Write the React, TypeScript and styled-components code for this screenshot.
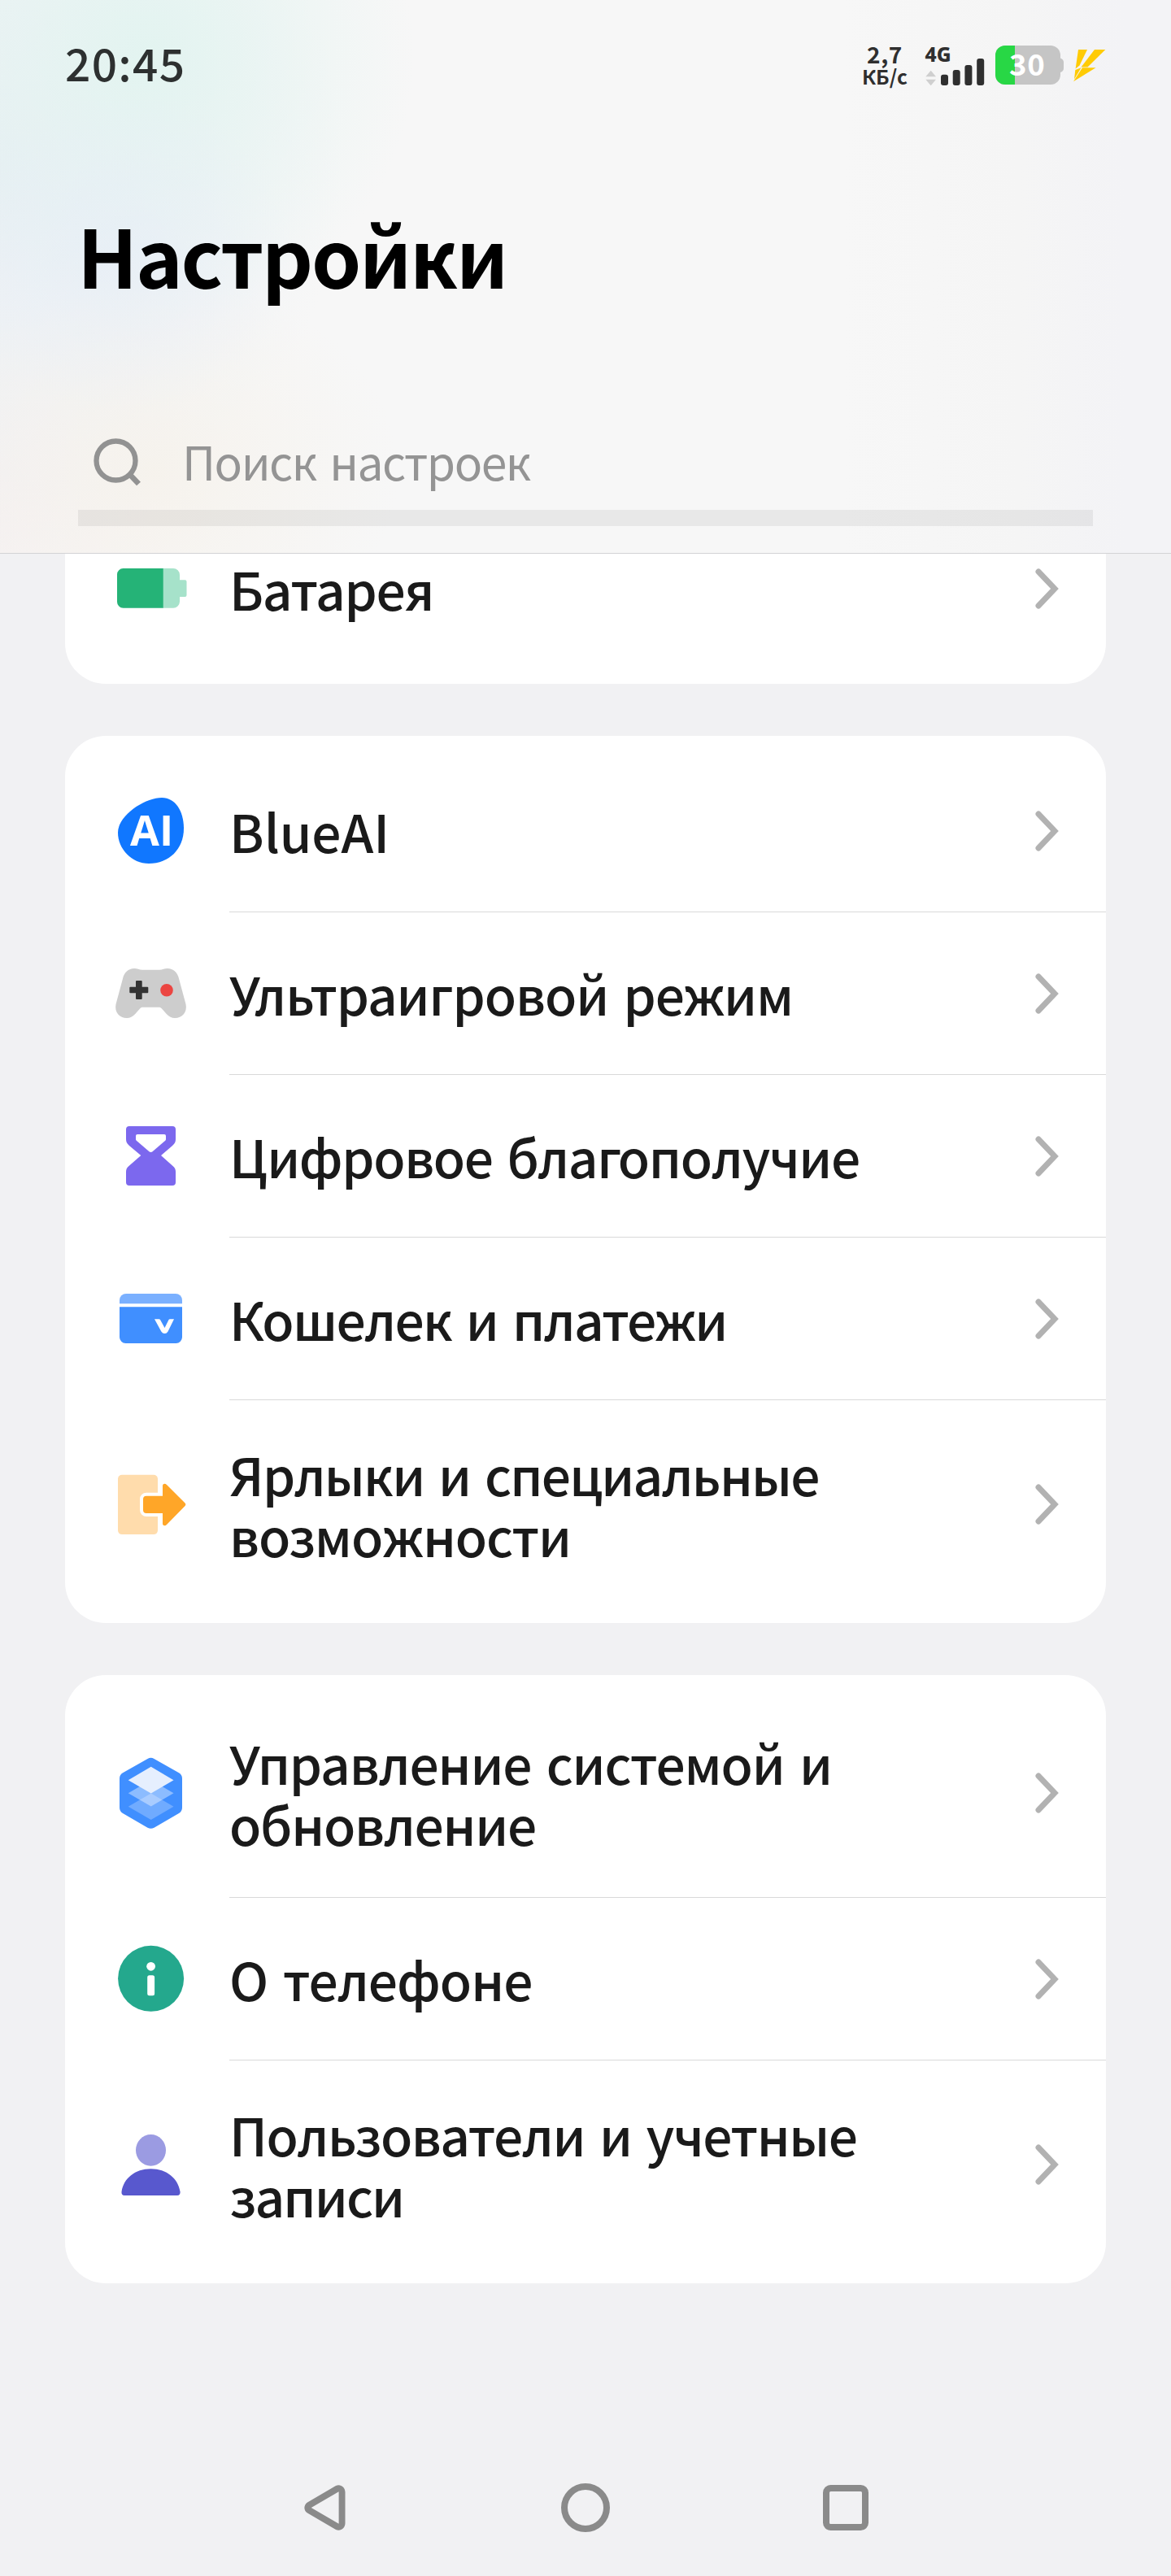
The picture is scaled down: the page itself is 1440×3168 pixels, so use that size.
import React from 'react';
import styled, { createGlobalStyle } from 'styled-components';

const uiFont = '"Noto Sans CJK SC", "Noto Sans", "Open Sans", sans-serif';

const GlobalStyle = createGlobalStyle`
  * { box-sizing: border-box; }
  body {
    margin: 0;
    background: #f1f1f3;
    font-family: ${uiFont};
  }
  svg { display: block; overflow: visible; }
`;

const Screen = styled.div`
  display: flex;
  flex-direction: column;
  width: 1440px;
  height: 3168px;
  overflow: hidden;
  background: #f1f1f3;
`;

const Header = styled.header`
  position: relative;
  z-index: 1;
  display: flex;
  flex-direction: column;
  flex: none;
  height: 681px;
  border-bottom: 1px solid #d3d3d5;
  background:
    radial-gradient(ellipse 210px 200px at 150px 310px, rgba(230, 237, 247, 0.6), rgba(230, 237, 247, 0)),
    radial-gradient(ellipse 300px 240px at 190px 580px, rgba(246, 242, 235, 0.85), rgba(246, 242, 235, 0)),
    radial-gradient(ellipse 330px 330px at 180px 70px, rgba(226, 244, 240, 0.95), rgba(226, 244, 240, 0)),
    radial-gradient(ellipse 420px 480px at 0 200px, rgba(231, 238, 243, 0.95), rgba(231, 238, 243, 0)),
    radial-gradient(ellipse 260px 260px at 0 620px, rgba(245, 240, 241, 0.95), rgba(245, 240, 241, 0)),
    linear-gradient(90deg, #f7f7f7 72%, #f5f5f5 87%, #f3f3f6 96%);
`;

const StatusBar = styled.div`
  display: flex;
  justify-content: space-between;
  height: 160px;
  padding: 0 80px;
`;

const Clock = styled.time`
  padding-top: 36px;
  font-size: 55px;
  font-weight: 500;
  line-height: 80px;
  letter-spacing: 1.3px;
  color: #2d3030;
`;

const StatusIcons = styled.div`
  display: flex;
  align-items: flex-start;
  padding-top: 54px;
`;

const NetSpeed = styled.div`
  display: flex;
  flex-direction: column;
  align-items: center;
  width: 56px;
  margin-right: 22px;
  color: #2f2f2f;
  font-weight: 700;
  white-space: nowrap;
`;

const SpeedValue = styled.span`
  font-size: 28px;
  line-height: 24px;
  letter-spacing: 0.6px;
`;

const SpeedUnit = styled.span`
  font-size: 24.5px;
  line-height: 32px;
  letter-spacing: 0.2px;
`;

const SignalSlot = styled.div`
  width: 74px;
  margin-right: 12px;
`;

const BatterySlot = styled.div`
  width: 84px;
  margin: 2px 12px 0 0;
`;

const BoltSlot = styled.div`
  width: 40px;
  padding-top: 7px;
`;

const Title = styled.h1`
  margin: 0;
  padding: 80px 0 0 95px;
  font-size: 98px;
  font-weight: 700;
  line-height: 144px;
  letter-spacing: -2.3px;
  color: #000;
`;

const SearchField = styled.div`
  display: flex;
  align-items: flex-start;
  width: 1248px;
  height: 127px;
  margin: 136px 0 0 96px;
  padding-left: 18px;
  border-bottom: 20px solid rgba(0, 0, 0, 0.058);
`;

const SearchIconSlot = styled.span`
  width: 110px;
  padding-top: 17px;
`;

const SearchPlaceholder = styled.span`
  font-size: 57px;
  line-height: 84px;
  letter-spacing: -1.5px;
  word-spacing: 5px;
  padding-top: 4px;
  color: #949494;
`;

const List = styled.main`
  display: flex;
  flex-direction: column;
  gap: 64px;
  flex: 1;
  margin-top: -74px;
  padding: 0 80px;
`;

const Card = styled.section`
  padding: 17px 0;
  border-radius: 50px;
  background: #fff;
`;

const Row = styled.div<{ $tall: boolean }>`
  display: flex;
  height: ${p => (p.$tall ? 257 : 200)}px;
`;

const IconSlot = styled.div<{ $tall: boolean }>`
  flex: none;
  width: 202px;
  padding: ${p => (p.$tall ? 84 : 56)}px 0 0 62px;
`;

const RowBody = styled.div<{ $divided: boolean; $tall: boolean }>`
  display: flex;
  flex: 1;
  justify-content: space-between;
  align-items: flex-start;
  padding: ${p => (p.$tall ? 53 : 62)}px 56px 0 0;
  border-bottom: 1px solid ${p => (p.$divided ? '#d9d9d9' : 'transparent')};
`;

const Label = styled.div`
  display: flex;
  flex-direction: column;
  font-size: 64px;
  font-weight: 500;
  line-height: 75px;
  word-spacing: 5px;
  color: #1a1a1a;
  white-space: nowrap;
`;

const LabelLine = styled.span<{ $tracking: number }>`
  letter-spacing: ${p => p.$tracking}px;
`;

const ChevronSlot = styled.span<{ $tall: boolean }>`
  padding-top: ${p => (p.$tall ? 49 : 12)}px;
`;

const NavBar = styled.nav`
  display: flex;
  flex: none;
  height: 168px;
  padding: 0 240px;
`;

const NavButton = styled.div`
  display: flex;
  flex: 1;
  align-items: center;
  justify-content: center;
`;

const Icon = ({ children }: { children: React.ReactNode }) => (
  <svg width="88" height="88" viewBox="0 0 88 88">{children}</svg>
);

const BatteryIcon = () => (
  <Icon>
    <path d="M58 19H71a8 8 0 0 1 8 8V33.3H85.5a2 2 0 0 1 2 2V52a2 2 0 0 1-2 2H79V60a8 8 0 0 1-8 7.7H58Z" fill="#a6e2ca" />
    <path d="M58.7 19V67.7H9.5a7.5 7.5 0 0 1-7.5-7.5V26.5A7.5 7.5 0 0 1 9.5 19Z" fill="#25b377" />
  </Icon>
);

const BlueAiIcon = () => (
  <Icon>
    <path d="M57 3C74 3 84 20 84 41C84 66 66 84 41 84C20 84 3 66 3 46C3 24 37 3 57 3Z" fill="#1077ff" />
    <text x="18" y="62" fill="#fff" fontFamily='"Open Sans", sans-serif' fontWeight="700" fontSize="52">AI</text>
  </Icon>
);

const GamepadIcon = () => (
  <Icon>
    <path d="M23 13C27 13 29 14.7 33 14.7H54C58 14.7 60 13 64 13C71 13 76.5 18 78 25.5L86.5 57C88.5 67 82 74 73 74C69 74 66 72.5 63 69.3L57 62.5C56 61.3 55 60.7 53.5 60.7H33.5C32 60.7 31 61.3 30 62.5L24 69.3C21 72.5 18 74 14 74C5 74-1.5 67 .5 57L9 25.5C10.5 18 16 13 23 13Z" fill="#cdcdcd" />
    <rect x="17.3" y="35.7" width="23" height="7.6" rx="1" fill="#333" />
    <rect x="25" y="28" width="7.7" height="23" rx="1" fill="#333" />
    <circle cx="63" cy="39.7" r="7.8" fill="#eb4541" />
  </Icon>
);

const HourglassIcon = () => (
  <Icon>
    <path d="M17 7H70a4 4 0 0 1 4 4V23c0 3-1 5.500-4 8L56 43 70 55.500c3 2.500 4 4.500 4 7.500V76a4 4 0 0 1-4 4H17a4 4 0 0 1-4-4V63c0-3 1-5 4-7.500L31.300 43 17 31c-3-2.500-4-5-4-8V11a4 4 0 0 1 4-4Z" fill="#7c68ee" />
    <path d="M27 17H60a2 2 0 0 1 2 2V23q0 1-.8 1.700L45.500 38.200q-2 1.500-4 0L25.800 24.700Q25 24 25 23V19a2 2 0 0 1 2-2Z" fill="#fff" />
  </Icon>
);

const WalletIcon = () => (
  <Icon>
    <path d="M5 25.300V21a8 8 0 0 1 8-8H74a8 8 0 0 1 8 8V25.300Z" fill="#7ab0ff" />
    <path d="M5 29.300H82V66.500a7.500 7.500 0 0 1-7.500 7.500H12.500A7.500 7.500 0 0 1 5 66.500Z" fill="#408fff" />
    <path d="M48 44.300H53.500q1 0 1.500.8L60.500 55 65.500 45.100q.5-.8 1.500-.8H72L64.500 59.500Q63 62 60.500 62T56.300 59.500Z" fill="#fff" />
  </Icon>
);

const ShortcutIcon = () => (
  <Icon>
    <rect x="3" y="7.700" width="49" height="73.400" rx="5" fill="#ffdcac" />
    <path
      d="M38 33.700H58V21.500q0-2.800 2.500-2.800 1.200 0 2.500 1.300L85.300 42.300q2 2 0 4L63 69q-1.300 1.300-2.500 1.300-2.500 0-2.500-2.800V55H38a4 4 0 0 1-4-4V37.700a4 4 0 0 1 4-4Z"
      fill="#ffa628" stroke="#fff" strokeWidth="8" paintOrder="stroke"
    />
  </Icon>
);

const SystemIcon = () => (
  <Icon>
    <path d="M47.500 1.900 78 19.300q4 2.300 4 7V62q0 4.700-4 7L47.500 86.700q-4 2.200-8 0L9 69q-4-2.300-4-7V26.300q0-4.700 4-7L39.500 1.900q4-2.200 8 0Z" fill="#408fff" />
    <path d="M43.700 44.500 71.500 60.700 43.700 77 15.700 60.700Z" fill="#fff" opacity=".25" />
    <path d="M43.700 28 71.500 44.300 43.700 60.500 15.700 44.300Z" fill="#fff" opacity=".4" />
    <path d="M43.700 11.700 71.500 28.200 43.700 44.500 15.700 28.200Z" fill="#e6effe" />
  </Icon>
);

const AboutIcon = () => (
  <Icon>
    <circle cx="43.600" cy="43.300" r="40.500" fill="#24a88d" />
    <circle cx="43.600" cy="28.300" r="5.400" fill="#fff" />
    <rect x="39.200" y="39.300" width="8.900" height="24.900" rx="2.500" fill="#fff" />
  </Icon>
);

const UsersIcon = () => (
  <Icon>
    <rect x="25" y="7" width="37" height="38.700" rx="18.500" ry="19.300" fill="#9b9be2" />
    <path d="M7.500 77.500C10 61 24 49.300 43.500 49.300S77 61 79.600 77.500C79.900 80 78.500 82 76 82H11C8.500 82 7.100 80 7.500 77.500Z" fill="#5858ce" />
  </Icon>
);

const Chevron = () => (
  <svg width="32" height="52" viewBox="0 0 32 52">
    <path d="M5 5 25 26 5 47" fill="none" stroke="#b2b2b2" strokeWidth="7" strokeLinecap="round" strokeLinejoin="miter" />
  </svg>
);

const SearchIcon = () => (
  <svg width="62" height="64" viewBox="0 0 62 64">
    <circle cx="28.500" cy="29.500" r="24" fill="none" stroke="#929292" strokeWidth="6.300" />
    <path d="M46.500 47.500 56.500 58" stroke="#929292" strokeWidth="6.800" fill="none" />
  </svg>
);

/* Network type, data arrows and the four signal bars. */
const SignalIcon = () => (
  <svg width="74" height="52" viewBox="0 0 74 52">
    <text x="-.5" y="21.700" fill="#2f2f2f" fontFamily='"Noto Sans", sans-serif' fontWeight="800" fontSize="24.500" textLength="32" lengthAdjust="spacingAndGlyphs">4G</text>
    <path d="M.3 40.300 6.700 32.700 13 40.300ZM.3 43.700H13L6.700 51.300Z" fill="#cfcfcf" />
    <g fill="#2f2f2f">
      <rect x="19" y="37.700" width="9" height="13.300" rx="3" />
      <rect x="33.700" y="32" width="9" height="19" rx="3" />
      <rect x="48.400" y="26" width="9" height="25" rx="3" />
      <rect x="63.200" y="18" width="9" height="33" rx="3" />
    </g>
  </svg>
);

const ChargeIcon = () => (
  <svg width="84" height="48" viewBox="0 0 84 48">
    <clipPath id="charge"><rect width="80" height="48" rx="12" /></clipPath>
    <g clipPath="url(#charge)">
      <rect width="80" height="48" fill="#c5c5c5" />
      <rect width="24" height="48" fill="#28d745" />
    </g>
    <path d="M80 15.500q4 1.500 4 5V28q0 3.500-4 5Z" fill="#c5c5c5" />
    <text x="17" y="37.200" fill="#fff" fontFamily={uiFont} fontWeight="700" fontSize="36.500" letterSpacing=".6">30</text>
  </svg>
);

const BoltIcon = () => (
  <svg width="40" height="40" viewBox="0 0 40 40" fill="#ffcb05">
    <path d="M6 0H17L7.500 19.500 2.600 23.500Z" />
    <path d="M26 0H39.300L17.500 21.500H9.500Z" />
    <path d="M2.300 25 9.500 22.300 1 36.500Z" />
    <path d="M11 22.300H27.500L0 39.300Z" />
  </svg>
);

type Line = [text: string, tracking: number];
type Item = { lines: Line[]; icon: React.ReactNode };

const cards: Item[][] = [
  [{ lines: [['Батарея', -1.4]], icon: <BatteryIcon /> }],
  [
    { lines: [['BlueAI', -0.05]], icon: <BlueAiIcon /> },
    { lines: [['Ультраигровой режим', -1.1]], icon: <GamepadIcon /> },
    { lines: [['Цифровое благополучие', -1.4]], icon: <HourglassIcon /> },
    { lines: [['Кошелек и платежи', -1.7]], icon: <WalletIcon /> },
    { lines: [['Ярлыки и специальные', -1.8], ['возможности', -1.1]], icon: <ShortcutIcon /> },
  ],
  [
    { lines: [['Управление системой и', -1.15], ['обновление', -1.3]], icon: <SystemIcon /> },
    { lines: [['О телефоне', -1]], icon: <AboutIcon /> },
    { lines: [['Пользователи и учетные', -1.45], ['записи', -1.9]], icon: <UsersIcon /> },
  ],
];

export default function App() {
  return (
    <Screen>
      <GlobalStyle />
      <Header>
        <StatusBar>
          <Clock>20:45</Clock>
          <StatusIcons>
            <NetSpeed>
              <SpeedValue>2,7</SpeedValue>
              <SpeedUnit>КБ/с</SpeedUnit>
            </NetSpeed>
            <SignalSlot><SignalIcon /></SignalSlot>
            <BatterySlot><ChargeIcon /></BatterySlot>
            <BoltSlot><BoltIcon /></BoltSlot>
          </StatusIcons>
        </StatusBar>
        <Title>Настройки</Title>
        <SearchField>
          <SearchIconSlot><SearchIcon /></SearchIconSlot>
          <SearchPlaceholder>Поиск настроек</SearchPlaceholder>
        </SearchField>
      </Header>
      <List>
        {cards.map((rows, c) => (
          <Card key={c}>
            {rows.map((row, i) => {
              const tall = row.lines.length > 1;
              return (
                <Row key={i} $tall={tall}>
                  <IconSlot $tall={tall}>{row.icon}</IconSlot>
                  <RowBody $tall={tall} $divided={i < rows.length - 1}>
                    <Label>
                      {row.lines.map(([text, tracking]) => (
                        <LabelLine key={text} $tracking={tracking}>{text}</LabelLine>
                      ))}
                    </Label>
                    <ChevronSlot $tall={tall}><Chevron /></ChevronSlot>
                  </RowBody>
                </Row>
              );
            })}
          </Card>
        ))}
      </List>
      <NavBar>
        <NavButton>
          <svg width="56" height="60" viewBox="0 0 56 60">
            <path fillRule="evenodd" fill="#8a8a8a" d="M6 23.500 41 3C46.500.5 52.500 4.500 52.500 11V49C52.500 55.500 46.500 59.500 41 57L6 36.500C1.200 33.500 1.200 26.500 6 23.500ZM10.700 30 44.600 49.700V10.300Z" />
          </svg>
        </NavButton>
        <NavButton>
          <svg width="60" height="60" viewBox="0 0 60 60">
            <circle cx="30" cy="30" r="26" fill="none" stroke="#8a8a8a" strokeWidth="8" />
          </svg>
        </NavButton>
        <NavButton>
          <svg width="56" height="56" viewBox="0 0 56 56">
            <rect x="4" y="4" width="48" height="48" rx="5.500" fill="none" stroke="#8a8a8a" strokeWidth="8" />
          </svg>
        </NavButton>
      </NavBar>
    </Screen>
  );
}
